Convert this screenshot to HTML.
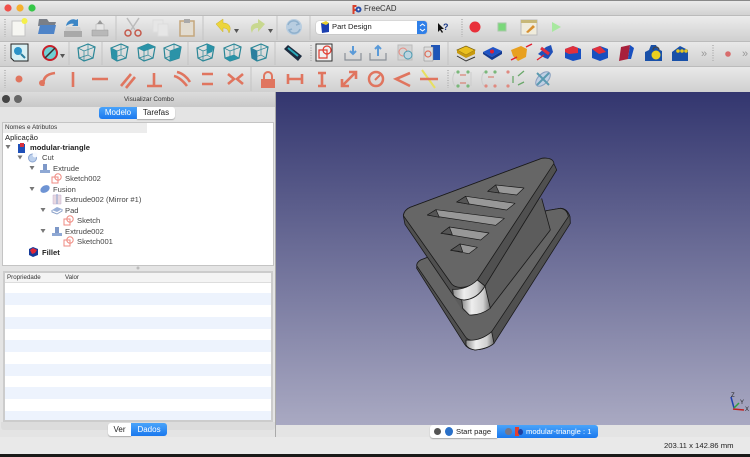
<!DOCTYPE html>
<html><head><meta charset="utf-8">
<style>
html,body{margin:0;padding:0;background:#e9e9e9}
#p{position:relative;width:750px;height:457px;overflow:hidden;background:#e9e9e9;font-family:"Liberation Sans",sans-serif;color:#222;filter:blur(.35px)}
#p div,#p span{position:absolute;white-space:nowrap}
.t{font-size:7.6px;line-height:11px}
</style></head><body><div id="p">
<!-- title bar -->
<div style="left:0;top:0;width:750px;height:15px;background:linear-gradient(#eaeaea,#d2d2d2);border-top:1px solid #888;box-sizing:border-box"></div>
<div class="t" style="left:364px;top:3px;font-size:7.8px;color:#333">FreeCAD</div>
<!-- toolbars bg -->
<div style="left:0;top:15px;width:750px;height:26px;background:linear-gradient(#ececec,#cfcfcf);border-top:1px solid #bbb;box-sizing:border-box"></div>
<div style="left:0;top:41px;width:750px;height:25px;background:linear-gradient(#e8e8e8,#cfcfcf);border-top:1px solid #bbb;box-sizing:border-box"></div>
<div style="left:0;top:66px;width:750px;height:26px;background:linear-gradient(#e8e8e8,#cfcfcf);border-top:1px solid #bbb;box-sizing:border-box"></div>
<!-- combo -->
<div style="left:316px;top:21px;width:111px;height:13px;background:#fff;border-radius:3px;box-shadow:0 0 1px #888"></div>
<div style="left:417px;top:21px;width:10px;height:13px;background:#2f7fe8;border-radius:0 3px 3px 0"></div>
<div class="t" style="left:332px;top:21px;color:#222">Part Design</div>

<svg style="position:absolute;left:0;top:0" width="750" height="93" viewBox="0 0 750 93">
<defs>
<g id="cube" fill="none" stroke="#2b8797" stroke-width="1.200"><path d="M-8-4 2-8 9-5 7 6-2 9-7 6Z"/><path d="M-8-4-2-1 9-5M-2-1-2 9M-7 6 2 3 7 6M2-8 2 3" stroke-width=".7"/></g>
</defs>
<!-- traffic lights -->
<circle cx="8" cy="8" r="3.600" fill="#f0504a"/><circle cx="20" cy="8" r="3.600" fill="#f5b02e"/><circle cx="32" cy="8" r="3.600" fill="#35c748"/>
<!-- freecad logo -->
<path d="M352.500 5h4v2h-2v2h2v2h-2v3h-2Z" fill="#d8402c"/><circle cx="358.500" cy="9.500" r="3" fill="#2a4fa8"/><circle cx="358.500" cy="9.500" r="1" fill="#fff"/>
<!-- grip handles -->
<g stroke="#bdbdbd" stroke-width="2" stroke-dasharray="1 1.500">
<path d="M5 19V37M5 45V62M5 70V88M311 45V62M462 19V37M713 45V62M448 70V88"/>
</g>
<g stroke="#c4c4c4" stroke-width="1"><path d="M116 16V40M203 16V40M277 16V40M310 16V40M69 42V65M102 42V65M188 42V65M275 42V65M448 42V65M251 67V91"/></g>
<!-- row 1 -->
<path d="M12 21h13v15H12Z" fill="#f6f6f2" stroke="#c4c4c4"/><circle cx="24.500" cy="21" r="3" fill="#f5f04a"/>
<path d="M38 26 39 19h8l2 3h7l-1 3Z" fill="#7a7f88"/><path d="M38 34 40 25h16l-2 9Z" fill="#4f84c8"/>
<path d="M64 31h18v6H64Z" fill="#a9a9a9"/><path d="M66 27l-1 4h16l-1-4Z" fill="#d0d0d0"/><path d="M66 26c1-6 7-8 10-6l2-1v7h-6l2-2c-2-1-5 0-8 2Z" fill="#3c86c6"/>
<path d="M92 30h16v6H92Z" fill="#b8b8b8" stroke="#999" stroke-width=".5"/><path d="M96 24h8v6h-8Z" fill="#e6e6e6" stroke="#aaa" stroke-width=".5"/><path d="M100 20l3 4h-6Z" fill="#999"/>
<g stroke="#bbb" fill="none" stroke-width="1.500"><path d="M127 18l8 12M139 18l-8 12"/></g><circle cx="128" cy="33" r="3" fill="none" stroke="#c4584a" stroke-width="1.500"/><circle cx="138" cy="33" r="3" fill="none" stroke="#c4584a" stroke-width="1.500"/>
<path d="M153 20h10v12h-10Z" fill="#e6e6e6" stroke="#ddd"/><path d="M158 24h10v12h-10Z" fill="#e6e6e6" stroke="#ddd"/>
<path d="M180 21h14v15h-14Z" fill="#e2dcd0" stroke="#c4a67c" stroke-width="1.500"/><path d="M184 19h6v4h-6Z" fill="#aaa"/>
<path d="M216 24l7-5v4c6 0 9 4 6 10-1-4-3-5-6-5v4Z" fill="#ecd53c" stroke="#c8b030" stroke-width=".5"/><path d="M234 29h5l-2.500 4Z" fill="#555"/>
<path d="M265 24l-7-5v4c-6 0-9 4-6 10 1-4 3-5 6-5v4Z" fill="#c8d890"/><path d="M268 29h5l-2.500 4Z" fill="#555"/>
<circle cx="294" cy="27" r="8" fill="#b8cde0"/><path d="M288 25a6 6 0 0 1 11-1l-3 1M300 29a6 6 0 0 1-11 1l3-1" fill="none" stroke="#8fb0cc" stroke-width="1.500"/>
<path d="M321 23h8v9l-7 1Z" fill="#1b3fb0"/><path d="M321 23l5-2 3 2-3 2Z" fill="#e8d030"/>
<path d="M420 26l2.500-2 2.500 2M420 29l2.500 2 2.500-2" stroke="#fff" fill="none"/>
<path d="M438 23v9l2-2 2 3 1-1-2-3h3Z" fill="#111"/><text x="443" y="30" font-size="9" font-weight="bold" fill="#1b3a8a" font-family="Liberation Sans">?</text>
<circle cx="475" cy="27" r="5.500" fill="#e8303a"/>
<rect x="498" y="23" width="8" height="8" fill="#7ad87a" stroke="#a8c8a8"/>
<path d="M521 20h16v15h-16Z" fill="#f0ecdc" stroke="#bbb"/><path d="M521 20h16v3h-16Z" fill="#c8b878"/><path d="M526 32l7-7 2 2-7 6Z" fill="#d89030"/>
<path d="M552 22l9 5-9 5Z" fill="#a8e8a0"/>
<!-- row 2 -->
<path d="M11 44h17v17H14l-3-3Z" fill="#d8f0f4" stroke="#222"/><circle cx="18" cy="51" r="4" fill="#2b93c8"/><path d="M21 54l4 4" stroke="#2b7f9f" stroke-width="2"/>
<circle cx="50" cy="53" r="7" fill="#6fd0d4" stroke="#c8202a" stroke-width="2"/><path d="M45 58l10-10" stroke="#333" stroke-width="1.500"/><path d="M60 54h5l-2.500 4Z" fill="#555"/>
<use href="#cube" x="86" y="52"/>
<use href="#cube" x="119" y="52"/><path d="M111 48l6 3v10l-5-3Z" fill="#2b93a8"/>
<use href="#cube" x="146" y="52"/><path d="M138 48l10-4 7 3-11 4Z" fill="#2b93a8"/>
<use href="#cube" x="172" y="52"/><path d="M170 51l11-4-2 11-9 3Z" fill="#2b93a8"/>
<use href="#cube" x="205" y="52"/><path d="M207 44l7 3-2 5-5 2Z" fill="#2b93a8"/>
<use href="#cube" x="232" y="52"/><path d="M225 58l9-3 5 3-9 3Z" fill="#2b93a8"/>
<use href="#cube" x="259" y="52"/><path d="M251 48l6 3v10l-5-3Z" fill="#2b7f9f"/>
<path d="M284 49l4-4 14 11-4 5Z" fill="#1d2c40"/><path d="M288 48l10 8" stroke="#2ba8b8" stroke-width="2"/>
<rect x="316" y="44" width="16" height="17" fill="#f0f0f0" stroke="#333"/><path d="M319 50h8v8h-8Z" fill="none" stroke="#e03c30" stroke-width="1.200"/><circle cx="327" cy="50" r="4" fill="none" stroke="#e03c30" stroke-width="1.200"/>
<g fill="none" stroke="#8a9098" stroke-width="1.200"><path d="M345 53v7h16v-7"/><path d="M370 53v7h16v-7"/></g><path d="M353 46v8M350 51l3 3 3-3" fill="none" stroke="#5a9ad8" stroke-width="2"/><path d="M378 56v-9M375 49l3-3 3 3" fill="none" stroke="#5a9ad8" stroke-width="2"/>
<rect x="398" y="45" width="14" height="15" fill="#d4d4d4" stroke="#bbb"/><circle cx="403" cy="52" r="4" fill="none" stroke="#e88a80"/><circle cx="408" cy="55" r="4" fill="#bcd4e0" stroke="#4a9ab0"/>
<path d="M431 45h9v15h-9Z" fill="#1f55b8"/><path d="M424 47h9v14h-9Z" fill="#ddd" stroke="#888" stroke-width=".5"/><circle cx="428" cy="54" r="3" fill="none" stroke="#e0705c" stroke-width="1.200"/>
<path d="M457 50l9-4 9 4-9 5Z" fill="#eac020" stroke="#7a6010" stroke-width=".7"/><path d="M457 50v3l9 5 9-4v-4l-9 5Z" fill="#c89a10"/><path d="M457 56l9 5 9-4" fill="none" stroke="#333"/>
<path d="M483 52l10-5 9 4-10 6Z" fill="#1f55c8"/><path d="M483 52v2l9 6 10-6v-3l-10 6Z" fill="#143a90"/><circle cx="492" cy="51.500" r="2" fill="#e02030"/>
<path d="M511 50l10-4 6 3-1 8-8 4-5-5Z" fill="#e8a020"/><path d="M511 60l6-3M526 47l6-3" stroke="#e02030" stroke-width="1.500"/>
<path d="M538 54l8-7 5-2 2 7-5 7-3-1Z" fill="#2050b8"/><path d="M541 48l8 6" stroke="#e03040" stroke-width="3"/><path d="M537 60l7-5" stroke="#e02030" stroke-width="1.300"/>
<path d="M565 49l8-3 8 3v10l-8 2-8-3Z" fill="#1850c0"/><path d="M565 49l8-3 5 2v5l-9 1-4-2Z" fill="#e0303c"/>
<path d="M592 49l8-3 8 3v9l-8 3-8-3Z" fill="#1850c0"/><path d="M592 49l8-3 6 6-7 2Z" fill="#e0303c"/>
<path d="M621 47l9-2-2 14-9 2Z" fill="#a8203c"/><path d="M630 45l4 3-3 11-3 0Z" fill="#1850c0"/>
<path d="M645 52l4-2 2-5h5l2 4 4 2v10h-17Z" fill="#1850a8"/><circle cx="656" cy="55" r="4.500" fill="#e8d020"/><path d="M653 50a3 3 0 0 1 6 0" fill="none" stroke="#444" stroke-width="1.300"/>
<path d="M672 52l8-6 8 4v11h-16Z" fill="#1850a8"/><circle cx="678" cy="51" r="1.800" fill="#e8c820"/><circle cx="682" cy="51" r="1.800" fill="#e8c820"/><circle cx="686" cy="51" r="1.800" fill="#e8c820"/>
<text x="701" y="57" font-size="11" fill="#999" font-family="Liberation Sans">»</text><circle cx="728" cy="54" r="2.800" fill="#d86c6c"/><text x="742" y="57" font-size="11" fill="#999" font-family="Liberation Sans">»</text>
<!-- row 3 sketcher -->
<g fill="none" stroke="#e0755f" stroke-width="2.600">
<path d="M43 86c0-8 3-12 12-13M73 72V87M92 79H108M121 86l10-12M126 88l9-11M154 73v12M147 86h15M174 76c5 1 9 5 13 10M177 72c5 1 10 5 13 10"/>
<path d="M202 74h11M202 84h11M228 74l6 5-6 5M243 74l-6 5 6 5"/>
<path d="M288 79h14M288 74v10M302 74v10M318 73h8M318 86h8M322 73v13M343 85l12-12M342 79v7h7M349 72h7v7"/>
<path d="M410 73l-14 6 14 7"/>
</g>
<circle cx="19" cy="79" r="3.500" fill="#e0755f"/><circle cx="42" cy="83" r="3" fill="#e0755f"/>
<path d="M261 79h14v9h-14Z" fill="#e0755f"/><path d="M264 79v-3a4 4 0 0 1 8 0v3" fill="none" stroke="#e0755f" stroke-width="2"/>
<circle cx="376" cy="79" r="7" fill="none" stroke="#e0755f" stroke-width="2.500"/><path d="M375 80l5-5" stroke="#e0755f" stroke-width="2"/>
<path d="M422 70l13 18" stroke="#e8e060" stroke-width="2"/><path d="M420 79h18" stroke="#e0755f" stroke-width="2.500"/>
<g fill="none" stroke="#ccc" stroke-width="1"><path d="M455 72c-3 4-3 10 0 14M471 72v14"/><path d="M484 72c-3 4-3 10 0 14"/></g>
<g fill="#7ab87a"><circle cx="458" cy="72" r="1.600"/><circle cx="468" cy="72" r="1.600"/><circle cx="458" cy="86" r="1.600"/><circle cx="468" cy="86" r="1.600"/><circle cx="486" cy="72" r="1.600"/><circle cx="495" cy="72" r="1.600"/></g>
<g fill="#e08a80"><circle cx="486" cy="86" r="1.600"/><circle cx="495" cy="86" r="1.600"/><circle cx="508" cy="72" r="1.600"/><circle cx="508" cy="86" r="1.600"/></g>
<path d="M460 75h6M460 83h6M488 77h6" stroke="#d87060"/><path d="M513 76v7M518 76l6-5M518 85l6-3" stroke="#6aa86a" stroke-width="1.300"/>
<ellipse cx="543" cy="79" rx="9" ry="5" transform="rotate(-45 543 79)" fill="#c0d0e4" stroke="#8aa0c0"/><path d="M537 85l12-12M537 73l12 12" stroke="#5a9ab0" stroke-width="2"/>
</svg>

<!-- 3D viewport -->
<div style="left:276px;top:92px;width:474px;height:333px;background:linear-gradient(#33366f,#a9a9c2)"></div>
<svg style="position:absolute;left:0;top:0" width="750" height="457" viewBox="0 0 750 457">
<defs><linearGradient id="cyl" x1="0" x2="1" y1="0" y2="0"><stop offset="0" stop-color="#8f8f8f"/><stop offset=".35" stop-color="#eeeeee"/><stop offset=".75" stop-color="#d0d0d0"/><stop offset="1" stop-color="#707070"/></linearGradient></defs>
<g transform="translate(390 145) scale(.33333)" stroke="#1a1a1a" stroke-width="2.400" stroke-linejoin="round">
<!-- bottom plate -->
<path d="M80 370Q80 352 92 345L470 197 510 190Q532 190 540 215L541 235 312 595Q292 612 255 615 232 612 224 598Z" fill="#505050"/>
<path d="M80 362Q80 352 92 345L470 197 510 190Q532 192 535 215L305 560Q285 585 250 587 232 585 226 575Z" fill="#646464"/>
<path d="M228 585Q270 590 305 560L312 595Q292 612 255 615 235 612 228 600Z" fill="url(#cyl)"/>
<!-- web -->
<path d="M120 350 455 160 481 255 300 490 220 500Z" fill="#5c5c5c" stroke="none"/>
<path d="M481 255 300 490" fill="none"/>
<path d="M455 160 481 255" fill="none"/>
<path d="M215 462Q250 460 285 423L301 490Q270 512 238 510L218 490Z" fill="url(#cyl)"/>
<!-- top plate -->
<path d="M40 212Q42 195 60 187L455 40Q485 33 500 75L285 423Q262 462 222 465 198 462 188 448L45 238Z" fill="#505050"/>
<path d="M40 212Q42 195 60 187L455 40Q488 36 492 55L262 405Q245 425 215 427 195 428 185 417Z" fill="#666"/>
<path d="M188 433Q230 435 262 405L285 423Q262 462 222 465 198 462 190 450Z" fill="url(#cyl)"/>
<!-- slots -->
<g stroke-width="2"><path d="M293 139 317 120 402 129 380 150Z" fill="#989898"/><path d="M293 139 317 120 328 144Z" fill="#555"/>
<path d="M200 171 227 154 375 175 350 195Z" fill="#989898"/><path d="M200 171 227 154 238 178Z" fill="#555"/>
<path d="M112 210 138 194 343 220 317 241Z" fill="#989898"/><path d="M112 210 138 194 148 217Z" fill="#555"/>
<path d="M153 265 178 246 297 264 272 285Z" fill="#989898"/><path d="M153 265 178 246 187 269Z" fill="#555"/>
<path d="M182 316 210 297 262 307 237 326Z" fill="#989898"/><path d="M182 316 210 297 218 320Z" fill="#555"/></g>
</g>
<!-- axis -->
<path d="M731 397 734 408" stroke="#2040b0" stroke-width="1.500"/><path d="M733 409 744 410" stroke="#c02020" stroke-width="1.500"/><path d="M734 408 739 403" stroke="#30a040" stroke-width="1.500"/>
<text x="731" y="397" font-size="6" fill="#222" font-family="Liberation Sans">Z</text><text x="740" y="404" font-size="6" fill="#222" font-family="Liberation Sans">Y</text><text x="745" y="411" font-size="6" fill="#222" font-family="Liberation Sans">X</text>
</svg>

<!-- left panel -->
<div style="left:0;top:92px;width:276px;height:345px;background:#e4e4e4;border-right:1px solid #aaa;box-sizing:border-box"></div>
<div style="left:0;top:92px;width:275px;height:15px;background:linear-gradient(#dcdcdc,#c8c8c8)"></div>
<div style="left:2px;top:95px;width:8px;height:8px;border-radius:50%;background:#444"></div>
<div style="left:14px;top:95px;width:8px;height:8px;border-radius:50%;background:#666"></div>
<div class="t" style="left:124px;top:94px;font-size:6.4px;color:#333">Visualizar Combo</div>
<div style="left:99px;top:107px;width:38px;height:12px;background:linear-gradient(#4aa4fa,#1a78ee);border-radius:3px 0 0 3px;color:#fff;font-size:8px;line-height:12px;text-align:center">Modelo</div>
<div style="left:137px;top:107px;width:38px;height:12px;background:#fff;border-radius:0 3px 3px 0;color:#222;font-size:8px;line-height:12px;text-align:center;box-shadow:0 1px 1px #aaa">Tarefas</div>
<!-- tree -->
<div style="left:2px;top:122px;width:272px;height:144px;background:#fff;border:1px solid #c4c4c4;box-sizing:border-box"></div>
<div style="left:3px;top:123px;width:144px;height:10px;background:#ececec"></div>
<div class="t" style="left:5px;top:123px;font-size:6.4px;line-height:10px;color:#333">Nomes e Atributos</div>
<div class="t" style="left:5px;top:132px;color:#222">Aplicação</div>
<div class="t" style="left:30px;top:142px;font-weight:bold;color:#222">modular-triangle</div>
<div class="t" style="left:42px;top:152px;color:#444">Cut</div>
<div class="t" style="left:53px;top:163px;color:#444">Extrude</div>
<div class="t" style="left:65px;top:173px;color:#444">Sketch002</div>
<div class="t" style="left:53px;top:184px;color:#444">Fusion</div>
<div class="t" style="left:65px;top:194px;color:#444">Extrude002 (Mirror #1)</div>
<div class="t" style="left:65px;top:205px;color:#444">Pad</div>
<div class="t" style="left:77px;top:215px;color:#444">Sketch</div>
<div class="t" style="left:65px;top:226px;color:#444">Extrude002</div>
<div class="t" style="left:77px;top:236px;color:#444">Sketch001</div>
<div class="t" style="left:42px;top:247px;font-weight:bold;color:#222">Fillet</div>
<svg style="position:absolute;left:0;top:0" width="276" height="270" viewBox="0 0 276 270">
<defs>
<g id="skt" fill="none" stroke="#ef8a80" stroke-width="1"><path d="M-5-1h6v6h-6Z"/><circle cx="1" cy="-1" r="3.200"/></g>
<g id="ext"><path d="M-5 2h10v3H-5Z" fill="#8ea8d4"/><path d="M-2-4h4v6h-4Z" fill="#7e98c8"/></g>
</defs>
<g fill="#777"><path d="M5.500 145h5l-2.500 4Z"/><path d="M17.500 155.500h5l-2.500 4Z"/><path d="M29.500 166h5l-2.500 4Z"/><path d="M29.500 187h5l-2.500 4Z"/><path d="M40.500 208h5l-2.500 4Z"/><path d="M40.500 229h5l-2.500 4Z"/></g>
<path d="M18 144h7v9h-7Z" fill="#1f50b8"/><path d="M20 143h4v4h-4Z" fill="#d8303c"/>
<circle cx="32.500" cy="158" r="4" fill="#bcd0ec" stroke="#8aa4d0"/><circle cx="35" cy="155" r="2.500" fill="#f4f8ff"/>
<use href="#ext" x="45" y="168"/>
<use href="#skt" x="57" y="178"/>
<ellipse cx="45" cy="189" rx="5" ry="3.500" fill="#6e94d4" transform="rotate(-30 45 189)"/>
<path d="M53 195h8v9h-8Z" fill="#e8d8e0" stroke="#c4b0d0" stroke-width=".5"/><path d="M57 194v10" stroke="#8aa4d0"/>
<path d="M52 210l5-3 5 2-5 3Z" fill="#9ab0d8"/><path d="M52 210v2l5 2 5-3v-2" fill="none" stroke="#8aa0c8"/>
<use href="#skt" x="69" y="220"/>
<use href="#ext" x="57" y="231"/>
<use href="#skt" x="69" y="241"/>
<path d="M29 249l4-2 5 2v6l-5 2-4-2Z" fill="#143a9a"/><path d="M30 250l3-2 4 2-2 3-3 1Z" fill="#e02838"/>
<circle cx="138" cy="268" r="1.500" fill="#bbb"/>
</svg>
<!-- property table -->
<div style="left:3px;top:271px;width:270px;height:151px;background:#fff;border:2px solid #ccc;box-sizing:border-box;overflow:hidden">
<div style="left:0;top:0;width:266px;height:9px;background:#f4f4f4;border-bottom:1px solid #ddd"></div>
<div class="t" style="left:2px;top:0;font-size:6.2px;line-height:10px;color:#333">Propriedade</div>
<div class="t" style="left:60px;top:0;font-size:6.2px;line-height:10px;color:#333">Valor</div>
<div style="left:0;top:20px;width:266px;height:12px;background:#edf3fd"></div>
<div style="left:0;top:44px;width:266px;height:12px;background:#edf3fd"></div>
<div style="left:0;top:67px;width:266px;height:12px;background:#edf3fd"></div>
<div style="left:0;top:91px;width:266px;height:12px;background:#edf3fd"></div>
<div style="left:0;top:114px;width:266px;height:12px;background:#edf3fd"></div>
<div style="left:0;top:138px;width:266px;height:10px;background:#edf3fd"></div>
</div>
<div style="left:1px;top:422px;width:274px;height:8px;background:#dcdcdc;border-radius:0 0 3px 3px"></div>
<div style="left:108px;top:423px;width:23px;height:13px;background:#fff;border-radius:3px 0 0 3px;font-size:8px;line-height:13px;text-align:center;color:#222;box-shadow:0 1px 1px #aaa">Ver</div>
<div style="left:131px;top:423px;width:36px;height:13px;background:linear-gradient(#4aa4fa,#1a78ee);border-radius:0 3px 3px 0;font-size:8px;line-height:13px;text-align:center;color:#fff">Dados</div>

<!-- bottom tabs -->
<div style="left:276px;top:425px;width:474px;height:12px;background:#e4e4e4"></div>
<div style="left:430px;top:425px;width:67px;height:13px;background:#fff;border-radius:3px 0 0 3px;box-shadow:0 1px 1px #aaa"></div>
<div style="left:497px;top:425px;width:101px;height:13px;background:linear-gradient(#4aa4fa,#1a78ee);border-radius:0 3px 3px 0"></div>
<div style="left:434px;top:428px;width:7px;height:7px;border-radius:50%;background:#555"></div>
<div style="left:445px;top:427px;width:8px;height:9px;border-radius:50%;background:#2a70c8"></div>
<div class="t" style="left:456px;top:426px;color:#222">Start page</div>
<div style="left:505px;top:428px;width:7px;height:7px;border-radius:50%;background:#778"></div>
<div style="left:515px;top:427px;width:4px;height:9px;background:#e04030"></div>
<div style="left:518px;top:429px;width:5px;height:6px;border-radius:50%;background:#1f3fa0"></div>
<div class="t" style="left:526px;top:426px;color:#fff">modular-triangle : 1</div>
<!-- status -->
<div class="t" style="left:664px;top:440px;font-size:7.7px;color:#222">203.11 x 142.86 mm</div>
<div style="left:0;top:454px;width:750px;height:3px;background:#1a1a18"></div>
</div></body></html>
